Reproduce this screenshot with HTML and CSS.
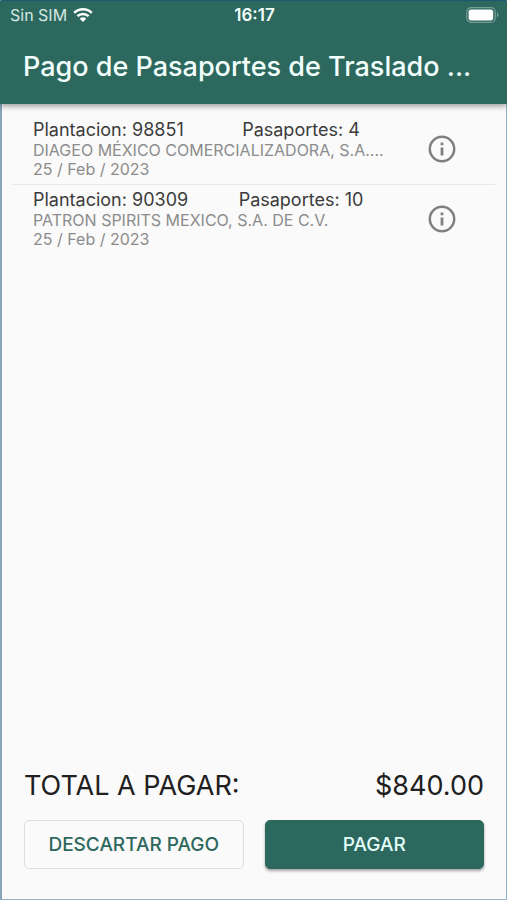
FILE: index.html
```html
<!DOCTYPE html>
<html lang="es">
<head>
<meta charset="utf-8">
<meta name="viewport" content="width=device-width, initial-scale=1">
<title>Pago de Pasaportes</title>
<link rel="stylesheet" href="styles.css">
</head>
<body>
<div class="screen">
  <header class="app-bar">
    <div class="status">
      <div class="carrier">
        <span>Sin SIM</span>
        <svg class="wifi" viewBox="0 0 20 16" aria-hidden="true">
          <path d="M1.2 5.8a12.5 12.5 0 0 1 17.6 0M4.4 9.2a8 8 0 0 1 11.2 0" fill="none" stroke="currentColor" stroke-width="2.5"/>
          <path d="M6.7 11.7a4.7 4.7 0 0 1 6.6 0L10 15z" fill="currentColor"/>
        </svg>
      </div>
      <span class="clock">16:17</span>
      <svg class="battery" viewBox="0 0 33 16" aria-hidden="true">
        <rect x=".7" y=".7" width="28.6" height="14.6" rx="4.5" fill="none" stroke="#fff" stroke-opacity=".35" stroke-width="1.2"/>
        <rect x="2.6" y="2.6" width="24.6" height="10.8" rx="2.6" fill="#fff"/>
        <path d="M31 5.5c2 .8 2 4.2 0 5z" fill="#fff" fill-opacity=".35"/>
      </svg>
    </div>
    <h1 class="title">Pago de Pasaportes de Traslado ...</h1>
  </header>
  <main class="list">
    <article class="item">
      <div class="details">
        <div class="heading"><span>Plantacion: 98851</span><span class="count">Pasaportes: 4</span></div>
        <p>DIAGEO MÉXICO COMERCIALIZADORA, S.A....</p>
        <p>25 / Feb / 2023</p>
      </div>
      <button class="info" type="button" aria-label="Información">
        <svg viewBox="0 0 28 28" aria-hidden="true"><circle cx="14" cy="14" r="12.2" fill="none" stroke="currentColor" stroke-width="2.5"/><path d="M12.6 7.5h2.8v2.7h-2.8zM12.6 12.5h2.8v8h-2.8z" fill="currentColor"/></svg>
      </button>
    </article>
    <article class="item">
      <div class="details">
        <div class="heading"><span>Plantacion: 90309</span><span class="count">Pasaportes: 10</span></div>
        <p>PATRON SPIRITS MEXICO, S.A. DE C.V.</p>
        <p>25 / Feb / 2023</p>
      </div>
      <button class="info" type="button" aria-label="Información">
        <svg viewBox="0 0 28 28" aria-hidden="true"><circle cx="14" cy="14" r="12.2" fill="none" stroke="currentColor" stroke-width="2.5"/><path d="M12.6 7.5h2.8v2.7h-2.8zM12.6 12.5h2.8v8h-2.8z" fill="currentColor"/></svg>
      </button>
    </article>
  </main>
  <footer class="summary">
    <div class="total"><span>TOTAL A PAGAR:</span><span>$840.00</span></div>
    <div class="actions">
      <button class="btn" type="button">DESCARTAR PAGO</button>
      <button class="btn primary" type="button">PAGAR</button>
    </div>
  </footer>
</div>
</body>
</html>
```
FILE: styles.css
```css
* { box-sizing: border-box; }

body {
  margin: 0;
  font-family: Inter, "Liberation Sans", sans-serif;
  color: #202020;
}

.screen {
  display: flex;
  flex-direction: column;
  min-height: 100vh;
  background: #fafafa;
  border: 1px solid #8fb4c4;
  border-top-color: #1f6078;
  border-left: 2px solid #86a5b9;
}

.app-bar {
  margin: 0 -1px 0 -2px;
  padding: 4px 8px 0 10px;
  height: 103px;
  background: #2d685e;
  color: #f2fffc;
  box-shadow: 0 2px 6px rgba(0, 0, 0, .4);
}

.status {
  display: grid;
  grid-template-columns: 1fr auto 1fr;
  align-items: center;
  height: 20px;
  font-size: 16px;
  line-height: 20px;
}

.carrier {
  display: flex;
  align-items: center;
  gap: 6px;
  color: #d5e7e3;
}

.wifi { width: 20px; height: 16px; color: #fff; }
.clock { font-size: 17px; font-weight: 600; }
.battery { width: 33px; height: 16px; justify-self: end; }

.title {
  margin: 24px 13px 0;
  font-size: 27px;
  line-height: 36px;
  font-weight: 500;
  white-space: nowrap;
}

.list {
  flex: 1;
  padding: 11px 11px 0;
}

.item {
  display: flex;
  align-items: center;
  height: 70px;
  padding: 0 37px 1px 20px;
  border-bottom: 1px solid #e6e6e6;
}

.item:last-child { border-bottom-color: transparent; }

.details { flex: 1; min-width: 0; }

.heading {
  display: grid;
  grid-template-columns: 178px 180px;
  font-size: 18px;
  line-height: 22px;
  color: #3c3c3c;
}

.count { text-align: center; }

.details p {
  margin: 0;
  font-size: 16px;
  line-height: 19px;
  color: #8c8c8c;
  white-space: nowrap;
}

.info {
  width: 32px;
  height: 32px;
  padding: 2px;
  border: 0;
  background: none;
  color: #808080;
}

.info svg { display: block; width: 28px; height: 28px; }

.summary { padding: 0 22px 30px; }

.total {
  display: flex;
  justify-content: space-between;
  font-size: 27px;
  line-height: 36px;
}

.actions {
  display: grid;
  grid-template-columns: 1fr 1fr;
  gap: 21px;
  margin-top: 16px;
}

.btn {
  height: 49px;
  padding: 0;
  border: 1px solid #dedede;
  border-radius: 5px;
  background: transparent;
  color: #2d685e;
  font: 500 19px/24px Inter, "Liberation Sans", sans-serif;
}

.primary {
  border-color: #2d685e;
  background: #2d685e;
  color: #e4fffa;
  box-shadow: 0 2px 3px rgba(0, 0, 0, .35);
}
```
